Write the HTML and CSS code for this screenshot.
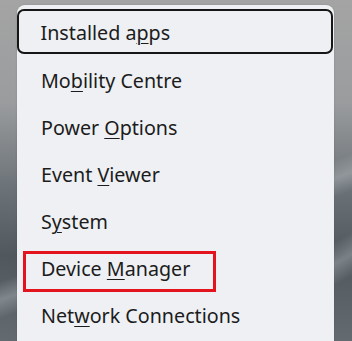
FILE: index.html
```html
<!DOCTYPE html>
<html lang="en">
<head>
<meta charset="utf-8">
<link rel="stylesheet" href="styles.css">
</head>
<body>
<div class="desktop">
  <div class="menu">
    <div class="item focused"><span class="label">Installed a<u>p</u>ps</span></div>
    <div class="item"><span class="label">Mo<u>b</u>ility Centre</span></div>
    <div class="item"><span class="label">Power <u>O</u>ptions</span></div>
    <div class="item"><span class="label">Event <u>V</u>iewer</span></div>
    <div class="item"><span class="label">S<u>y</u>stem</span></div>
    <div class="item highlighted"><span class="label">Device <u>M</u>anager</span></div>
    <div class="item"><span class="label">Net<u>w</u>ork Connections</span></div>
  </div>
</div>
</body>
</html>
```
FILE: styles.css
```css
html, body {
  margin: 0;
  padding: 0;
  width: 352px;
  height: 341px;
  overflow: hidden;
}
.desktop {
  width: 352px;
  height: 341px;
  box-sizing: border-box;
  padding: 5px 18px 0 17px;
  background:
    linear-gradient(160deg, rgba(255,255,255,0) 60%, rgba(200,205,210,0.35) 64%, rgba(255,255,255,0) 68%),
    linear-gradient(150deg, rgba(255,255,255,0) 80%, rgba(200,205,210,0.35) 84%, rgba(255,255,255,0) 88%),
    linear-gradient(180deg, #a4a4a4 0%, #9a9c9e 30%, #6c7378 55%, #50585e 75%, #646b70 100%);
  font-family: "Noto Sans", "Open Sans", sans-serif;
}
.menu {
  height: 100%;
  background: #eef0f3;
  border-radius: 8px 8px 0 0;
  padding-top: 4px;
  box-sizing: border-box;
  display: flex;
  flex-direction: column;
  box-shadow: 0 0 2px rgba(0,0,0,0.15);
}
.item {
  position: relative;
  height: 47px;
  display: flex;
  align-items: center;
  padding-left: 24px;
  padding-top: 2px;
  font-size: 19.7px;
  color: #1c1c1c;
  box-sizing: border-box;
}
.label {
  white-space: pre;
}
.item u {
  text-underline-offset: 3px;
  text-decoration-thickness: 1px;
}
.focused {
  height: 45px;
  margin-bottom: 2px;
  border: 2.5px solid #161616;
  border-radius: 7px;
  padding-left: 21.5px;
  margin-right: 1px;
}
.highlighted::after {
  content: "";
  position: absolute;
  left: 6px;
  top: 7px;
  width: 193px;
  height: 41px;
  box-sizing: border-box;
  border: 3px solid #e3141d;
}
```
